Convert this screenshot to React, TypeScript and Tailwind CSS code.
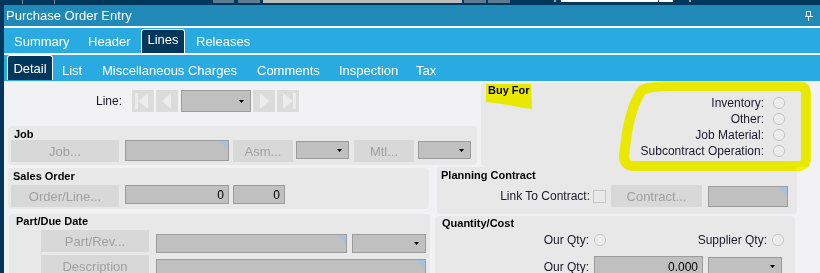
import React from "react";

const Btn = ({ label, className = "" }: { label: string; className?: string }) => (
  <div
    className={`flex h-[22px] shrink-0 items-center justify-center bg-[#d8d8d8] text-[13px] leading-[15px] text-[#a0a0a0] ${className}`}
  >
    {label}
  </div>
);

const Field = ({
  className = "",
  value,
  corner,
}: {
  className?: string;
  value?: string;
  corner?: boolean;
}) => (
  <div
    className={`relative flex shrink-0 items-center justify-end border border-[#9c9c9c] bg-[#c0c0c0] pr-[4px] text-[12px] leading-[14px] text-black ${className}`}
  >
    {value}
    {corner && (
      <svg className="absolute right-0 top-0" width="9" height="9" viewBox="0 0 9 9">
        <polygon points="0,0 9,0 9,9" fill="#a9c0de" />
      </svg>
    )}
  </div>
);

const Combo = ({ className = "" }: { className?: string }) => (
  <div
    className={`flex shrink-0 items-center justify-end border border-[#9c9c9c] bg-[#c0c0c0] pr-[6px] ${className}`}
  >
    <svg width="5" height="3" viewBox="0 0 5 3">
      <polygon points="0,0 5,0 2.5,3" fill="#000" />
    </svg>
  </div>
);

const Radio = () => (
  <div className="h-[12px] w-[12px] shrink-0 rounded-full border border-[#c2c2c2] bg-[#ebebeb] shadow-[inset_0_0_0_1px_#f7f7f7]" />
);

const NavBtn = ({ kind }: { kind: "first" | "prev" | "next" | "last" }) => (
  <div className="flex h-[22px] w-[22px] shrink-0 items-center justify-center bg-[#dbdbdb]">
    <svg width="22" height="22" viewBox="0 0 22 22">
      {kind === "first" && (
        <>
          <rect x="3" y="3" width="3" height="16" fill="#ececec" />
          <polygon points="6,11 16,3 16,19" fill="#ececec" />
        </>
      )}
      {kind === "prev" && <polygon points="6,11 15,3 15,19" fill="#ececec" />}
      {kind === "next" && <polygon points="16,11 7,3 7,19" fill="#ececec" />}
      {kind === "last" && (
        <>
          <rect x="16" y="3" width="3" height="16" fill="#ececec" />
          <polygon points="16,11 6,3 6,19" fill="#ececec" />
        </>
      )}
    </svg>
  </div>
);

const Heading = ({ children }: { children: React.ReactNode }) => (
  <div className="h-[11px] whitespace-nowrap text-[11px] font-bold leading-[11px] text-black">{children}</div>
);

const Label = ({ children, className = "" }: { children: React.ReactNode; className?: string }) => (
  <div className={`shrink-0 whitespace-nowrap text-right text-[12px] leading-[14px] text-[#1a1a2a] ${className}`}>
    {children}
  </div>
);

export default function App() {
  return (
    <div className="relative flex h-[273px] w-[820px] flex-col overflow-hidden bg-[#01375a] font-['Liberation_Sans',Arial,sans-serif]">
      {/* top strip */}
      <div className="flex h-[5px] shrink-0 items-start">
        <div className="ml-[22px] h-[4px] w-px bg-[#6f8ba0]" />
        <div className="ml-[31px] h-[4px] w-px bg-[#6f8ba0]" />
        <div className="ml-[158px] h-[3px] w-[21px] bg-[#5b7c93]" />
        <div className="ml-[4px] h-[3px] w-[22px] bg-[#5b7c93]" />
        <div className="ml-[3px] h-[3px] w-[199px] bg-[#bdbdbd]" />
        <div className="ml-[2px] h-[3px] w-[22px] bg-[#5b7c93]" />
        <div className="ml-[2px] h-[3px] w-[22px] bg-[#5b7c93]" />
        <div className="ml-[44px] h-[2px] w-[2px] bg-[#a0a8b0]" />
        <div className="ml-[5px] flex h-[2px] w-[112px] justify-end bg-white">
          <div className="mr-[14px] h-[2px] w-px bg-[#1b3d5a]" />
        </div>
        <div className="ml-[16px] h-[2px] w-[2px] bg-[#a0a8b0]" />
      </div>

      <div className="flex min-h-0 flex-1">
        <div className="w-[4px] shrink-0" />
        <div className="flex min-w-0 flex-1 flex-col bg-[#f2f2f4]">
          {/* title bar */}
          <div className="flex h-[21px] shrink-0 items-center justify-between bg-[#2089b8] pl-[2px] pr-[7px]">
            <span className="text-[13px] leading-[21px] text-white">Purchase Order Entry</span>
            <svg width="8" height="10" viewBox="0 0 8 10">
              <rect x="1.5" y="0.5" width="4" height="5" fill="none" stroke="#e8eef2" />
              <rect x="0" y="5" width="8" height="1" fill="#e8eef2" />
              <rect x="3" y="6" width="1" height="4" fill="#e8eef2" />
            </svg>
          </div>
          <div className="h-[2px] shrink-0 bg-[#f4f8fb]" />

          {/* main tabs */}
          <div className="flex h-[25px] shrink-0 items-end bg-[#29aae1] text-[13px] leading-[15px] text-white">
            <div className="ml-[10px] h-[25px] w-[56px] whitespace-nowrap pt-[6px]">Summary</div>
            <div className="ml-[18px] h-[25px] w-[42px] whitespace-nowrap pt-[6px]">Header</div>
            <div className="ml-[11px] h-[24px] w-[44px] rounded-t-[3px] border border-b-0 border-white bg-[#01375a] pt-[2px] text-center">
              Lines
            </div>
            <div className="ml-[11px] h-[25px] whitespace-nowrap pt-[6px]">Releases</div>
          </div>
          <div className="h-[2px] shrink-0 bg-[#f4f8fb]" />

          {/* sub tabs */}
          <div className="flex h-[26px] shrink-0 items-start bg-[#29aae1] text-[13px] leading-[15px] text-white">
            <div className="ml-[3px] h-[25px] w-[46px] rounded-t-[3px] border border-b-0 border-white bg-[#01375a] pt-[5px] text-center">
              Detail
            </div>
            <div className="ml-[9px] w-[21px] whitespace-nowrap pt-[8px]">List</div>
            <div className="ml-[19px] w-[137px] whitespace-nowrap pt-[8px]">Miscellaneous Charges</div>
            <div className="ml-[18px] w-[64px] whitespace-nowrap pt-[8px]">Comments</div>
            <div className="ml-[18px] w-[61px] whitespace-nowrap pt-[8px]">Inspection</div>
            <div className="ml-[16px] whitespace-nowrap pt-[8px]">Tax</div>
          </div>

          {/* content */}
          <div className="flex min-h-0 flex-1 flex-col">
            {/* row A */}
            <div className="flex h-[86px] shrink-0 items-start">
              <div className="ml-[4px] flex w-[469px] shrink-0 flex-col">
                <div className="mt-[9px] flex h-[22px] items-center">
                  <Label className="w-[114px]">Line:</Label>
                  <div className="ml-[10px]">
                    <NavBtn kind="first" />
                  </div>
                  <div className="ml-[2px]">
                    <NavBtn kind="prev" />
                  </div>
                  <Combo className="ml-[3px] h-[22px] w-[70px]" />
                  <div className="ml-[2px]">
                    <NavBtn kind="next" />
                  </div>
                  <div className="ml-[2px]">
                    <NavBtn kind="last" />
                  </div>
                </div>
                <div className="mt-[14px] flex h-[39px] flex-col rounded-[4px] bg-[#e8e8e8] pl-[6px] pt-[3px]">
                  <Heading>Job</Heading>
                  <div className="-ml-[3px] flex items-start">
                    <Btn label="Job..." className="w-[108px]" />
                    <Field className="ml-[6px] h-[21px] w-[104px]" corner />
                    <Btn label="Asm..." className="ml-[4px] w-[60px]" />
                    <Combo className="ml-[3px] mt-[1px] h-[18px] w-[53px]" />
                    <Btn label="Mtl..." className="ml-[5px] w-[60px]" />
                    <Combo className="ml-[4px] mt-[1px] h-[18px] w-[53px]" />
                  </div>
                </div>
              </div>

              <div className="ml-[4px] mt-[2px] flex h-[84px] w-[329px] shrink-0 flex-col rounded-[4px] bg-[#e8e8e8] pl-[7px] pt-[2px]">
                <div className="h-[10px] text-[11px] font-bold leading-[11px] text-black">Buy For</div>
                <div className="flex flex-col pr-[25px]">
                  {["Inventory:", "Other:", "Job Material:", "Subcontract Operation:"].map((t) => (
                    <div key={t} className="flex h-[16px] items-center justify-end">
                      <Label>{t}</Label>
                      <div className="ml-[9px]">
                        <Radio />
                      </div>
                    </div>
                  ))}
                </div>
              </div>
            </div>

            {/* row B */}
            <div className="flex h-[47px] shrink-0 items-start">
              <div className="ml-[4px] mt-[1px] flex h-[41px] w-[421px] shrink-0 flex-col rounded-[4px] bg-[#e8e8e8] pl-[5px] pt-[3px]">
                <Heading>Sales Order</Heading>
                <div className="-ml-[2px] mt-[3px] flex items-start">
                  <Btn label="Order/Line..." className="w-[108px]" />
                  <Field className="ml-[6px] h-[19px] w-[104px]" value="0" />
                  <Field className="ml-[4px] h-[19px] w-[52px]" value="0" />
                </div>
              </div>
              <div className="ml-[8px] flex h-[47px] w-[360px] shrink-0 flex-col rounded-[4px] bg-[#e8e8e8] pl-[4px] pt-[3px]">
                <Heading>Planning Contract</Heading>
                <div className="-ml-[4px] mt-[4px] flex items-center">
                  <Label className="w-[153px]">Link To Contract:</Label>
                  <div className="ml-[3px] h-[13px] w-[13px] shrink-0 border border-[#c6c6c6] bg-[#e9e9e9]" />
                  <Btn label="Contract..." className="ml-[5px] w-[91px]" />
                  <Field className="ml-[6px] h-[21px] w-[80px]" corner />
                </div>
              </div>
            </div>

            {/* row C */}
            <div className="flex min-h-0 flex-1 items-start">
              <div className="ml-[5px] flex h-[80px] w-[421px] shrink-0 flex-col rounded-[4px] bg-[#e8e8e8] pl-[7px] pt-[2px]">
                <Heading>Part/Due Date</Heading>
                <div className="ml-[25px] mt-[3px] flex items-start">
                  <Btn label="Part/Rev..." className="w-[108px]" />
                  <Field className="ml-[7px] mt-[4px] h-[19px] w-[191px]" corner />
                  <Combo className="ml-[5px] mt-[4px] h-[19px] w-[74px]" />
                </div>
                <div className="ml-[25px] mt-[2px] flex items-start">
                  <Btn label="Description" className="w-[108px]" />
                  <Field className="ml-[7px] mt-[4px] h-[19px] w-[270px]" corner />
                </div>
              </div>
              <div className="ml-[5px] mt-[2px] flex h-[80px] w-[360px] shrink-0 flex-col rounded-[4px] bg-[#e8e8e8] pl-[7px] pt-[2px]">
                <Heading>Quantity/Cost</Heading>
                <div className="-ml-[7px] mt-[3px] flex h-[16px] items-center">
                  <Label className="w-[154px]">Our Qty:</Label>
                  <div className="ml-[5px]">
                    <Radio />
                  </div>
                  <Label className="w-[161px]">Supplier Qty:</Label>
                  <div className="ml-[5px]">
                    <Radio />
                  </div>
                </div>
                <div className="-ml-[7px] mt-[8px] flex items-center">
                  <Label className="w-[154px]">Our Qty:</Label>
                  <Field className="ml-[5px] h-[21px] w-[109px]" value="0.000" />
                  <Combo className="ml-[5px] h-[19px] w-[74px]" />
                </div>
              </div>
            </div>
          </div>
        </div>
      </div>

      {/* yellow highlighter marks drawn over the screenshot */}
      <svg
        className="pointer-events-none absolute left-0 top-0 mix-blend-multiply"
        width="820"
        height="273"
        viewBox="0 0 820 273"
      >
        <polygon
          points="486,84 531,84 532,109 524,108 513,106 502,104 486,102"
          fill="#ffff00"
        />
        <path
          d="M 642 90 Q 650 86 670 86 L 798 86 Q 806 86 806 94 L 806 158 Q 806 166 798 166 L 634 166 Q 624 166 624 156 L 626 140 Q 630 108 642 90 Z"
          fill="none"
          stroke="#ffff00"
          strokeWidth="10"
          strokeLinejoin="round"
        />
      </svg>
    </div>
  );
}
